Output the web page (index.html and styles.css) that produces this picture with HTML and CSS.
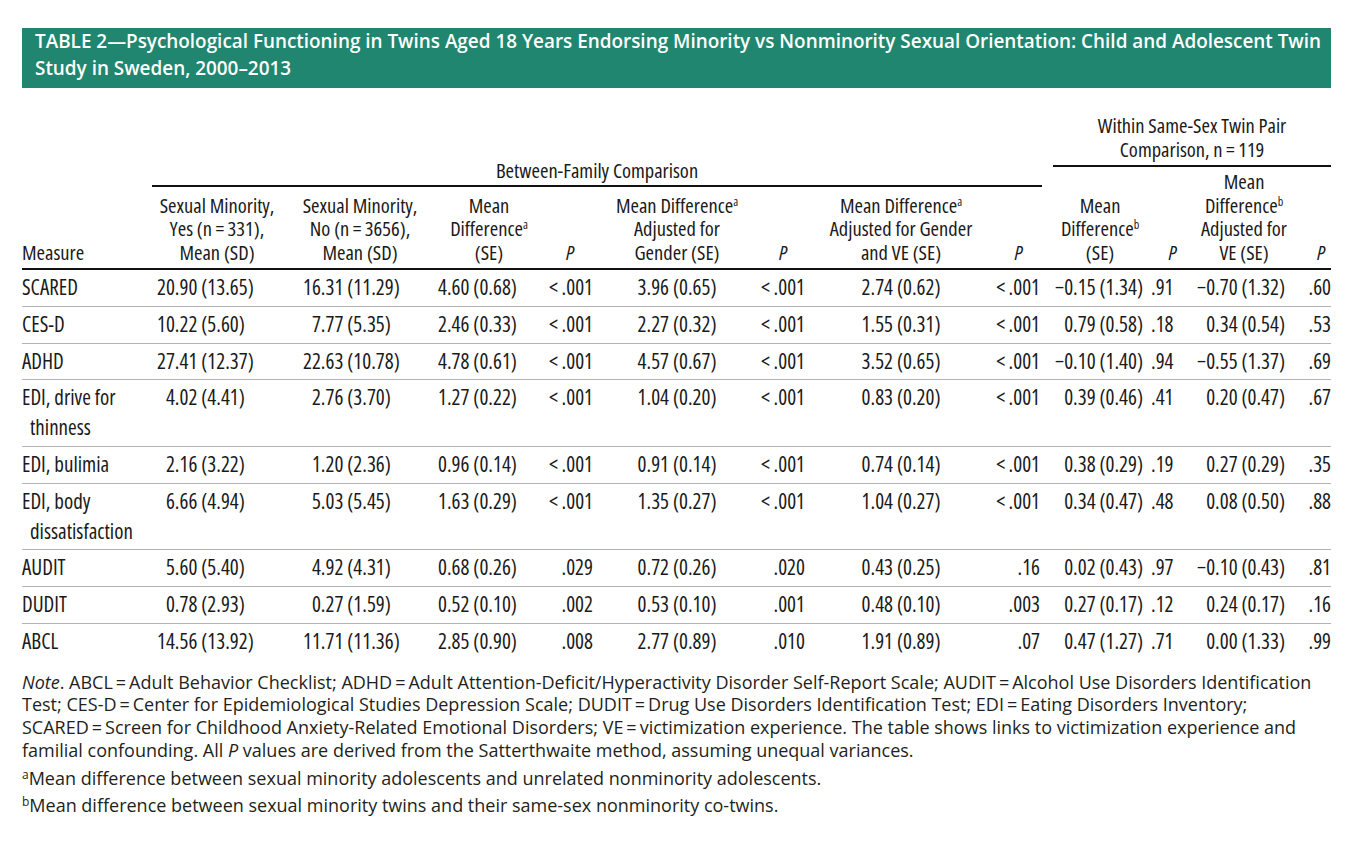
FILE: index.html
```html
<!DOCTYPE html>
<html lang="en">
<head>
<meta charset="utf-8">
<title>Table 2</title>
<link rel="stylesheet" href="styles.css">
</head>
<body>
<div class="page">
  <div class="title-bar">TABLE 2—Psychological Functioning in Twins Aged 18 Years Endorsing Minority vs Nonminority Sexual Orientation: Child and Adolescent Twin<br>Study in Sweden, 2000–2013</div>

  <table class="data">
    <colgroup>
      <col class="c1"><col class="c2"><col class="c3"><col class="c4"><col class="c5"><col class="c6"><col class="c7"><col class="c8"><col class="c9"><col class="c10"><col class="c11"><col class="c12"><col class="c13">
    </colgroup>
    <thead>
      <tr class="hr1">
        <th rowspan="2" class="blank"></th>
        <th colspan="8" rowspan="2" class="group-between"><div class="between-rule">Between-Family Comparison</div></th>
        <th colspan="4" class="group-within">Within Same-Sex Twin Pair<br>Comparison, n&thinsp;=&thinsp;119</th>
      </tr>
      <tr class="hr2">
        <th rowspan="2" class="colh">Mean<br>Difference<sup>b</sup><br>(SE)</th>
        <th rowspan="2" class="colh ph p11">P</th>
        <th rowspan="2" class="colh">Mean<br>Difference<sup>b</sup><br>Adjusted for<br>VE (SE)</th>
        <th rowspan="2" class="colh ph p13">P</th>
      </tr>
      <tr class="hr3">
        <th class="colh measure">Measure</th>
        <th class="colh">Sexual Minority,<br>Yes (n&thinsp;=&thinsp;331),<br>Mean (SD)</th>
        <th class="colh">Sexual Minority,<br>No (n&thinsp;=&thinsp;3656),<br>Mean (SD)</th>
        <th class="colh">Mean<br>Difference<sup>a</sup><br>(SE)</th>
        <th class="colh ph">P</th>
        <th class="colh">Mean Difference<sup>a</sup><br>Adjusted for<br>Gender (SE)</th>
        <th class="colh ph">P</th>
        <th class="colh">Mean Difference<sup>a</sup><br>Adjusted for Gender<br>and VE (SE)</th>
        <th class="colh ph p9">P</th>
      </tr>
    </thead>
    <tbody>
      <tr>
        <td class="m">SCARED</td><td class="v2">20.90 (13.65)</td><td class="v3">16.31 (11.29)</td><td class="v4">4.60 (0.68)</td><td class="pv">&lt;&thinsp;.001</td><td class="vc">3.96 (0.65)</td><td class="pv">&lt;&thinsp;.001</td><td class="vc">2.74 (0.62)</td><td class="pv p9">&lt;&thinsp;.001</td><td class="v10">−0.15 (1.34)</td><td class="pw">.91</td><td class="v12">−0.70 (1.32)</td><td class="pz">.60</td>
      </tr>
      <tr>
        <td class="m">CES-D</td><td class="v2">10.22 (5.60)</td><td class="v3">&#8199;7.77 (5.35)</td><td class="v4">2.46 (0.33)</td><td class="pv">&lt;&thinsp;.001</td><td class="vc">2.27 (0.32)</td><td class="pv">&lt;&thinsp;.001</td><td class="vc">1.55 (0.31)</td><td class="pv p9">&lt;&thinsp;.001</td><td class="v10">0.79 (0.58)</td><td class="pw">.18</td><td class="v12">0.34 (0.54)</td><td class="pz">.53</td>
      </tr>
      <tr>
        <td class="m">ADHD</td><td class="v2">27.41 (12.37)</td><td class="v3">22.63 (10.78)</td><td class="v4">4.78 (0.61)</td><td class="pv">&lt;&thinsp;.001</td><td class="vc">4.57 (0.67)</td><td class="pv">&lt;&thinsp;.001</td><td class="vc">3.52 (0.65)</td><td class="pv p9">&lt;&thinsp;.001</td><td class="v10">−0.10 (1.40)</td><td class="pw">.94</td><td class="v12">−0.55 (1.37)</td><td class="pz">.69</td>
      </tr>
      <tr>
        <td class="m">EDI, drive for<br>thinness</td><td class="v2">&#8199;4.02 (4.41)</td><td class="v3">&#8199;2.76 (3.70)</td><td class="v4">1.27 (0.22)</td><td class="pv">&lt;&thinsp;.001</td><td class="vc">1.04 (0.20)</td><td class="pv">&lt;&thinsp;.001</td><td class="vc">0.83 (0.20)</td><td class="pv p9">&lt;&thinsp;.001</td><td class="v10">0.39 (0.46)</td><td class="pw">.41</td><td class="v12">0.20 (0.47)</td><td class="pz">.67</td>
      </tr>
      <tr>
        <td class="m">EDI, bulimia</td><td class="v2">&#8199;2.16 (3.22)</td><td class="v3">&#8199;1.20 (2.36)</td><td class="v4">0.96 (0.14)</td><td class="pv">&lt;&thinsp;.001</td><td class="vc">0.91 (0.14)</td><td class="pv">&lt;&thinsp;.001</td><td class="vc">0.74 (0.14)</td><td class="pv p9">&lt;&thinsp;.001</td><td class="v10">0.38 (0.29)</td><td class="pw">.19</td><td class="v12">0.27 (0.29)</td><td class="pz">.35</td>
      </tr>
      <tr>
        <td class="m">EDI, body<br>dissatisfaction</td><td class="v2">&#8199;6.66 (4.94)</td><td class="v3">&#8199;5.03 (5.45)</td><td class="v4">1.63 (0.29)</td><td class="pv">&lt;&thinsp;.001</td><td class="vc">1.35 (0.27)</td><td class="pv">&lt;&thinsp;.001</td><td class="vc">1.04 (0.27)</td><td class="pv p9">&lt;&thinsp;.001</td><td class="v10">0.34 (0.47)</td><td class="pw">.48</td><td class="v12">0.08 (0.50)</td><td class="pz">.88</td>
      </tr>
      <tr>
        <td class="m">AUDIT</td><td class="v2">&#8199;5.60 (5.40)</td><td class="v3">&#8199;4.92 (4.31)</td><td class="v4">0.68 (0.26)</td><td class="pv">.029</td><td class="vc">0.72 (0.26)</td><td class="pv">.020</td><td class="vc">0.43 (0.25)</td><td class="pv p9">.16</td><td class="v10">0.02 (0.43)</td><td class="pw">.97</td><td class="v12">−0.10 (0.43)</td><td class="pz">.81</td>
      </tr>
      <tr>
        <td class="m">DUDIT</td><td class="v2">&#8199;0.78 (2.93)</td><td class="v3">&#8199;0.27 (1.59)</td><td class="v4">0.52 (0.10)</td><td class="pv">.002</td><td class="vc">0.53 (0.10)</td><td class="pv">.001</td><td class="vc">0.48 (0.10)</td><td class="pv p9">.003</td><td class="v10">0.27 (0.17)</td><td class="pw">.12</td><td class="v12">0.24 (0.17)</td><td class="pz">.16</td>
      </tr>
      <tr>
        <td class="m">ABCL</td><td class="v2">14.56 (13.92)</td><td class="v3">11.71 (11.36)</td><td class="v4">2.85 (0.90)</td><td class="pv">.008</td><td class="vc">2.77 (0.89)</td><td class="pv">.010</td><td class="vc">1.91 (0.89)</td><td class="pv p9">.07</td><td class="v10">0.47 (1.27)</td><td class="pw">.71</td><td class="v12">0.00 (1.33)</td><td class="pz">.99</td>
      </tr>
    </tbody>
  </table>

  <div class="notes">
    <p class="note"><i>Note</i>. ABCL&thinsp;=&thinsp;Adult Behavior Checklist; ADHD&thinsp;=&thinsp;Adult Attention-Deficit/Hyperactivity Disorder Self-Report Scale; AUDIT&thinsp;=&thinsp;Alcohol Use Disorders Identification<br>Test; CES-D&thinsp;=&thinsp;Center for Epidemiological Studies Depression Scale; DUDIT&thinsp;=&thinsp;Drug Use Disorders Identification Test; EDI&thinsp;=&thinsp;Eating Disorders Inventory;<br>SCARED&thinsp;=&thinsp;Screen for Childhood Anxiety-Related Emotional Disorders; VE&thinsp;=&thinsp;victimization experience. The table shows links to victimization experience and<br>familial confounding. All <i>P</i> values are derived from the Satterthwaite method, assuming unequal variances.</p>
    <p class="foot"><sup>a</sup>Mean difference between sexual minority adolescents and unrelated nonminority adolescents.</p>
    <p class="foot"><sup>b</sup>Mean difference between sexual minority twins and their same-sex nonminority co-twins.</p>
  </div>
</div>
</body>
</html>
```

FILE: styles.css
```css
html, body {
  margin: 0;
  padding: 0;
  background: #ffffff;
}

.page {
  margin-left: 22px;
  width: 1309px;
  padding-top: 28px;
}

.title-bar {
  background: #21866f;
  color: #ffffff;
  height: 60px;
  box-sizing: border-box;
  padding: 0 13px 0 13px;
  font-family: "Open Sans", "DejaVu Sans", sans-serif;
  font-weight: 600;
  font-size: 18.9px;
  line-height: 27px;
  white-space: nowrap;
}

.data {
  margin-top: 22px;
  width: 1309px;
  table-layout: fixed;
  border-collapse: collapse;
  font-family: "Open Sans", sans-serif;
  font-stretch: 75%;
  font-size: 20.5px;
  color: #1a1a1a;
}

.c1 { width: 130px; }
.c2 { width: 130px; }
.c3 { width: 156px; }
.c4 { width: 102px; }
.c5 { width: 60px; }
.c6 { width: 154px; }
.c7 { width: 58px; }
.c8 { width: 178px; }
.c9 { width: 63px; }
.c10 { width: 94px; }
.c11 { width: 43px; }
.c12 { width: 108px; }
.c13 { width: 33px; }

th {
  font-weight: normal;
  padding: 0;
  line-height: 23.5px;
}

sup {
  font-size: 12px;
  line-height: 0;
  vertical-align: 7px;
}

.hr1 { height: 56px; }
.hr2 { height: 21px; }
.hr3 { height: 82px; }

.group-within {
  text-align: center;
  vertical-align: top;
  padding: 4px 0 3px 0;
  border-bottom: 2px solid #111;
}

.group-between {
  vertical-align: bottom;
  padding: 0;
}

.between-rule {
  text-align: center;
  margin-right: 11px;
  line-height: 24px;
  padding-bottom: 3px;
  border-bottom: 2px solid #111;
}

.colh {
  text-align: center;
  vertical-align: bottom;
  padding: 0 0 4px 0;
  border-bottom: 2px solid #111;
}

.colh.measure {
  text-align: left;
}

.ph {
  font-style: italic;
}

.ph.p9 { padding-right: 6px; }
.ph.p11 { padding-left: 8px; }
.ph.p13 { text-align: right; padding-right: 6px; }

tbody td {
  padding: 3px 0 3px 0;
  font-size: 21px;
  line-height: 29.8px;
  vertical-align: top;
  border-bottom: 1px solid #b3b3b3;
  white-space: nowrap;
}

tbody tr:last-child td {
  border-bottom: none;
}

.m {
  padding-left: 8px;
  text-indent: -8px;
}

.v2 { padding-left: 5px; }
.v3 { padding-left: 21px; }
.v4 { padding-left: 0; }
.pv { text-align: right; padding-right: 7px; }
.pv.p9 { padding-right: 13px; }
.vc { text-align: center; }
.v10 { text-align: right; padding-right: 4px; }
.pw { padding-left: 4px; }
.v12 { text-align: right; padding-right: 13px; }
.pz { text-align: right; }

.notes {
  margin-top: 11px;
  font-family: "Open Sans", "DejaVu Sans", sans-serif;
  font-size: 18px;
  color: #231f20;
  white-space: nowrap;
}

.notes p {
  margin: 0;
}

.notes .note {
  line-height: 22.7px;
}

.notes .foot {
  margin-top: 6px;
  line-height: 21px;
}

.foot sup {
  font-size: 12px;
  vertical-align: 6px;
}
```
